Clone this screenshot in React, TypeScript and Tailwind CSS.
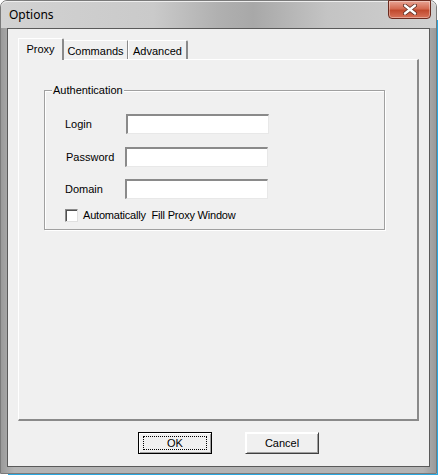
import React from "react";

const font = "font-['Liberation_Sans',Arial,sans-serif]";

function Input({ w }: { w: string }) {
  return (
    <div className={`${w} h-[20px] bg-white border-t-2 border-l-2 border-t-[#8a8a8a] border-l-[#8a8a8a] border-b border-r border-b-[#e8e8e8] border-r-[#e8e8e8]`} />
  );
}

function Button({ label, def }: { label: string; def?: boolean }) {
  return (
    <div
      className={`w-[74px] h-[22px] bg-[#f0f0f0] flex items-center justify-center text-[11px] text-black border border-[#404040] shadow-[inset_1px_1px_0_#ffffff,inset_-1px_-1px_0_#a0a0a0] ${
        def ? "border-black" : "border-t-white border-l-white border-b-[#404040] border-r-[#404040]"
      }`}
    >
      {def ? (
        <div className="w-[64px] h-[14px] border border-dotted border-black flex items-center justify-center">
          {label}
        </div>
      ) : (
        label
      )}
    </div>
  );
}

export default function App() {
  return (
    <div className={`w-[438px] h-[475px] ${font} relative overflow-hidden bg-white`}>
      <div className="w-[437px] h-[474px] flex flex-col rounded-t-[7px] bg-[linear-gradient(to_right,#9a9a9a,#b4b4b4_3%,#b4b4b4_97%,#9a9a9a)] border border-[#7a7a7a]">
        {/* title bar */}
        <div className="h-[27px] flex items-start justify-between rounded-t-[6px] bg-[linear-gradient(to_right,#d2d2d2,#cacaca_35%,#b0b0b0_50%,#a8a8a8_58%,#c4c4c4_75%,#cfcfcf)] shadow-[inset_0_1px_0_#eeeeee]">
          <span className="ml-[8px] mt-[6px] text-[12px] leading-[15px] text-black font-['Noto_Sans',sans-serif]">Options</span>
          <div className="mr-[5px] mt-[-1px] w-[43px] h-[19px] rounded-b-[4px] border border-[#6b2a1e] bg-[linear-gradient(to_bottom,#e8a494,#d46b52_45%,#c14a2e_55%,#d8735a)] flex items-center justify-center shadow-[inset_0_0_0_1px_rgba(255,255,255,0.35)]">
            <svg width="14" height="11" viewBox="0 0 14 11">
              <path d="M2 1.5 L12 9.5 M12 1.5 L2 9.5" stroke="#5a2a20" strokeWidth="4" strokeLinecap="round" />
              <path d="M2 1.5 L12 9.5 M12 1.5 L2 9.5" stroke="#ffffff" strokeWidth="2.4" strokeLinecap="round" />
            </svg>
          </div>
        </div>
        {/* client */}
        <div className="mx-[6px] mb-[6px] flex-1 border border-[#5a5a5a] bg-[#f0f0f0] flex flex-col">
          <div className="pl-[10px] pr-[10px] pt-[8px]">
            {/* tabs */}
            <div className="flex items-end h-[22px] text-[11px] text-black">
              <div className="h-[22px] w-[46px] bg-[#f0f0f0] border-t border-l border-white border-r-2 border-r-[#8a8a8a] rounded-tr-[2px] flex justify-center pt-[2px] relative z-10 mb-[-1px]">
                Proxy
              </div>
              <div className="h-[19px] w-[64px] border-t border-white border-r border-r-[#8a8a8a] flex justify-center pt-[2px]">
                Commands
              </div>
              <div className="h-[19px] w-[60px] border-t border-l border-white border-r-2 border-r-[#8a8a8a] flex justify-center pt-[2px] rounded-tr-[2px]">
                Advanced
              </div>
            </div>
            {/* panel */}
            <div className="h-[362px] border-t border-l border-white border-r-2 border-b-2 border-r-[#8a8a8a] border-b-[#8a8a8a] pt-[30px] pl-[25px] pr-[32px]">
              <div className="relative h-[140px] border border-[#a0a0a0] shadow-[1px_1px_0_#ffffff,inset_1px_1px_0_#ffffff]">
                <span className="absolute left-[7px] top-[-8px] px-[1px] bg-[#f0f0f0] text-[11px] leading-[14px] text-black">
                  Authentication
                </span>
                <div className="pt-[23px] pl-[20px] flex flex-col gap-[13px]">
                  <div className="flex items-center">
                    <span className="w-[61px] text-[11px]">Login</span>
                    <Input w="w-[143px]" />
                  </div>
                  <div className="flex items-center">
                    <span className="w-[60px] text-[11px] pl-[1px]">Password</span>
                    <Input w="w-[143px]" />
                  </div>
                  <div className="flex items-center mt-[-1px]">
                    <span className="w-[60px] text-[11px]">Domain</span>
                    <Input w="w-[143px]" />
                  </div>
                  <div className="flex items-center mt-[-5px]">
                    <div className="w-[13px] h-[13px] bg-white border-t border-l border-t-[#8a8a8a] border-l-[#8a8a8a] border-b border-r border-b-[#e0e0e0] border-r-[#e0e0e0] shadow-[inset_1px_1px_0_#505050]" />
                    <span className="ml-[5px] text-[11px] tracking-[-0.2px] whitespace-pre">Automatically  Fill Proxy Window</span>
                  </div>
                </div>
              </div>
            </div>
          </div>
          <div className="flex justify-start gap-[33px] pl-[130px] mt-[11px]">
            <Button label="OK" def />
            <Button label="Cancel" />
          </div>
        </div>
      </div>
      <div className="absolute right-0 top-[20px] bottom-0 w-[1px] bg-[#2aa7e0]" />
      <div className="absolute left-[8px] bottom-0 right-0 h-[1px] bg-[#2aa7e0]" />
    </div>
  );
}
